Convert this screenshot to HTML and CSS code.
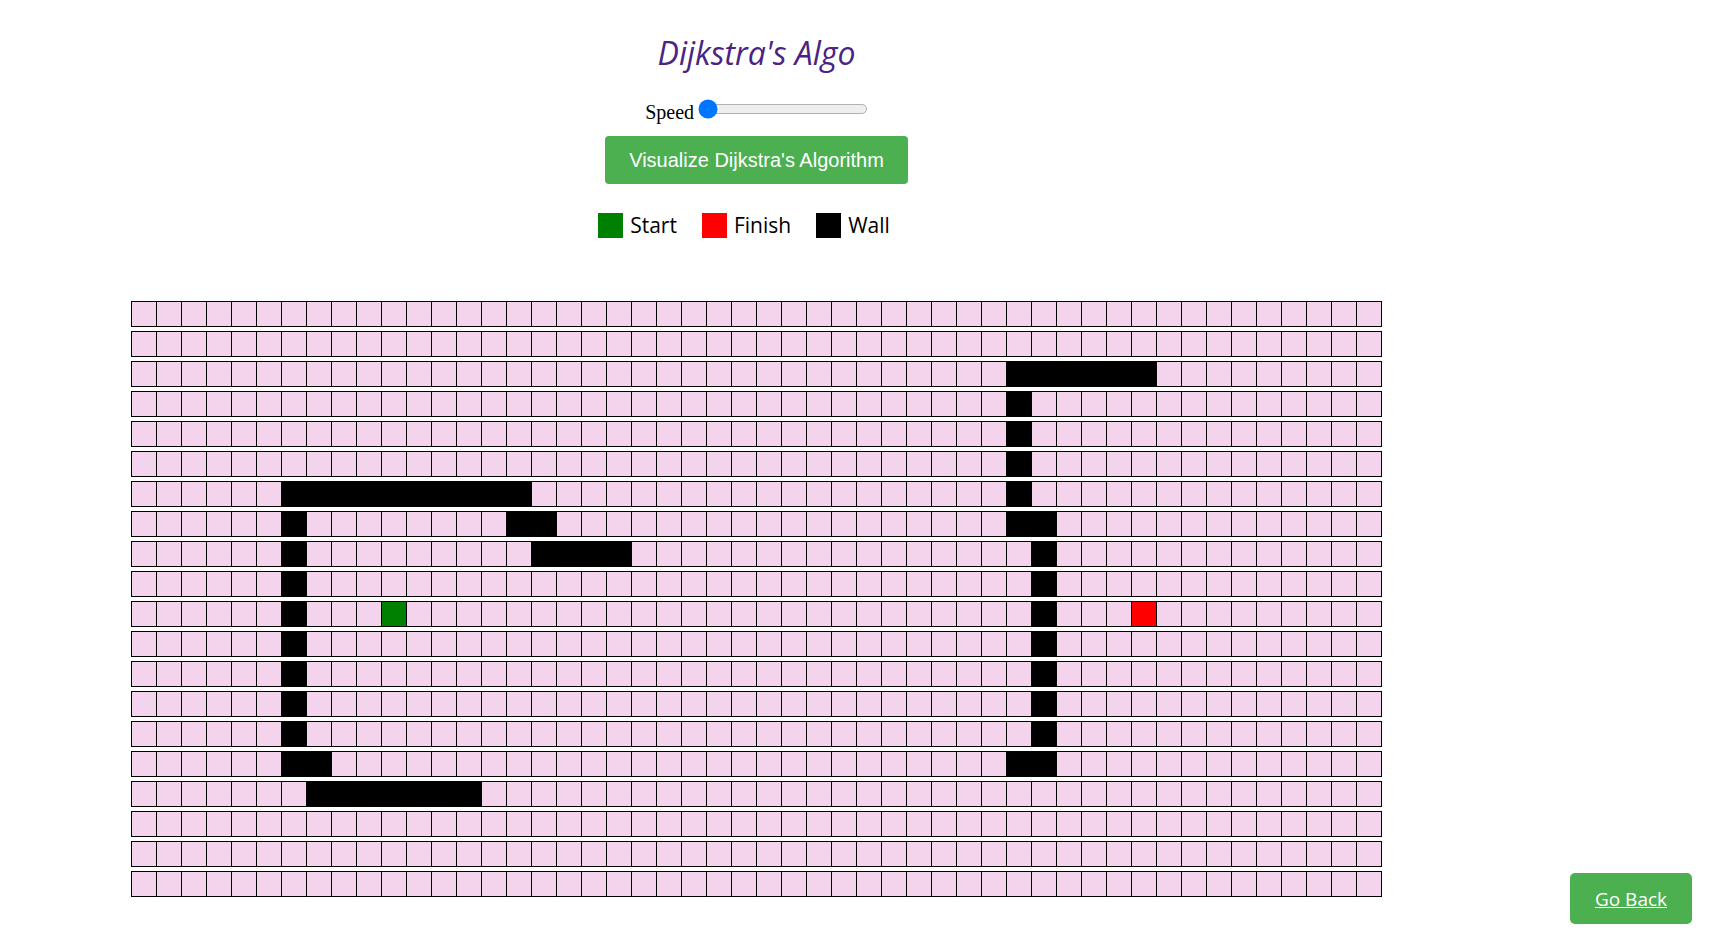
FILE: index.html
```html
<!DOCTYPE html>
<html lang="en">
<head>
<meta charset="utf-8">
<title>Dijkstra's Algo</title>
<link rel="stylesheet" href="styles.css">
</head>
<body>
<div class="app">
  <h1 class="title">Dijkstra's Algo</h1>
  <div class="speed">
    <label class="speed-label" for="speed">Speed</label>
    <input class="speed-slider" id="speed" type="range" min="0" max="100" value="0">
  </div>
  <button class="visualize">Visualize Dijkstra's Algorithm</button>
  <div class="legend">
    <div class="legend-item"><span class="swatch swatch-start"></span><span class="legend-text">Start</span></div>
    <div class="legend-item"><span class="swatch swatch-finish"></span><span class="legend-text">Finish</span></div>
    <div class="legend-item"><span class="swatch swatch-wall"></span><span class="legend-text">Wall</span></div>
  </div>
  <div class="grid" id="grid"></div>
</div>
<a class="go-back" href="#">Go Back</a>
<script src="script.js"></script>
</body>
</html>
```
FILE: styles.css
```css
html, body {
  margin: 0;
  background: #ffffff;
}

.app {
  width: 1251px;
  margin-left: 131px;
  display: flex;
  flex-direction: column;
  align-items: center;
}

.title {
  margin: 31px 0 0;
  font-family: "Open Sans", "DejaVu Sans", sans-serif;
  font-style: italic;
  font-weight: 400;
  font-size: 32px;
  line-height: 43px;
  color: #4b2382;
}

.speed {
  margin-top: 27px;
  display: flex;
  align-items: flex-start;
  height: 23px;
}

.speed-label {
  font-family: "Liberation Serif", "Times New Roman", serif;
  font-size: 20px;
  line-height: 23px;
  color: #000;
}

.speed-slider {
  zoom: 1.25;
  width: 136px;
  margin: -1.6px 0 0 3px;
}

.visualize {
  margin-top: 12px;
  padding: 12px 24px;
  border: none;
  border-radius: 4px;
  background: #4caf50;
  color: #ffffff;
  font-family: "Liberation Sans", Arial, sans-serif;
  font-size: 20px;
  line-height: 24px;
  cursor: pointer;
}

.legend {
  margin-top: 29px;
  display: flex;
  align-items: center;
}

.legend-item {
  display: flex;
  align-items: center;
  gap: 7px;
  margin-right: 25px;
}

.swatch {
  width: 25px;
  height: 25px;
  display: block;
}

.swatch-start { background: #008000; }
.swatch-finish { background: #ff0000; }
.swatch-wall { background: #000000; }

.legend-text {
  font-family: "Open Sans", sans-serif;
  font-size: 21px;
  line-height: 25px;
  color: #000;
}

.grid {
  margin-top: 63px;
  display: flex;
  flex-direction: column;
  gap: 4px;
  align-self: flex-start;
}

.row {
  display: flex;
  border-top: 1px solid #000;
  border-left: 1px solid #000;
}

.node {
  width: 25px;
  height: 25px;
  box-sizing: border-box;
  border-right: 1px solid #000;
  border-bottom: 1px solid #000;
  background: #f4d4ed;
}

.node-wall { background: #000000; }
.node-start { background: #008000; }
.node-finish { background: #ff0000; }

.go-back {
  position: fixed;
  right: 23px;
  bottom: 12px;
  width: 122px;
  height: 51px;
  border-radius: 5px;
  background: #4caf50;
  color: #ffffff;
  font-family: "Open Sans", sans-serif;
  font-size: 19px;
  display: flex;
  align-items: center;
  justify-content: center;
  text-decoration: underline;
}
```
FILE: script.js
```js
(function () {
  var ROWS = 20, COLS = 50;
  var walls = {};
  function w(r, c1, c2) {
    if (c2 === undefined) c2 = c1;
    for (var c = c1; c <= c2; c++) walls[r + ',' + c] = true;
  }
  w(2, 35, 40);
  w(3, 35); w(4, 35); w(5, 35); w(6, 35);
  w(7, 35, 36);
  for (var r = 8; r <= 14; r++) w(r, 36);
  w(15, 35, 36);
  w(6, 6, 15);
  w(7, 6); w(7, 15, 16);
  w(8, 6); w(8, 16, 19);
  for (var r2 = 9; r2 <= 14; r2++) w(r2, 6);
  w(15, 6, 7);
  w(16, 7, 13);

  var grid = document.getElementById('grid');
  for (var i = 0; i < ROWS; i++) {
    var row = document.createElement('div');
    row.className = 'row';
    for (var j = 0; j < COLS; j++) {
      var n = document.createElement('div');
      var cls = 'node';
      if (i === 10 && j === 10) cls += ' node-start';
      else if (i === 10 && j === 40) cls += ' node-finish';
      else if (walls[i + ',' + j]) cls += ' node-wall';
      n.className = cls;
      row.appendChild(n);
    }
    grid.appendChild(row);
  }
})();
```
